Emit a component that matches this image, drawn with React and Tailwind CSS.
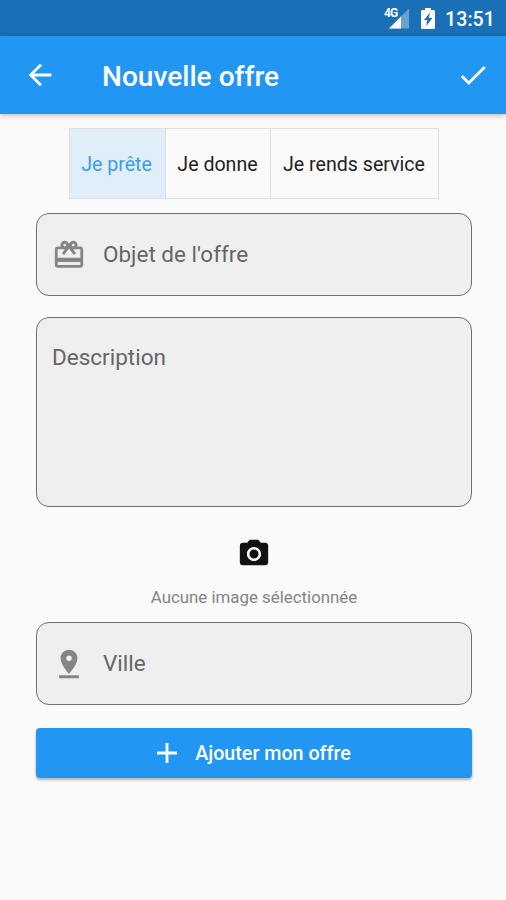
const ICONS = {
  back: "M20 11H7.83l5.59-5.59L12 4l-8 8 8 8 1.41-1.41L7.83 13H20v-2z",
  check: "M9 16.17L4.83 12l-1.42 1.41L9 19 21 7l-1.41-1.41z",
  gift: "M20 6h-2.18c.11-.31.18-.65.18-1 0-1.66-1.34-3-3-3-1.05 0-1.96.54-2.5 1.35l-.5.67-.5-.68C10.96 2.54 10.05 2 9 2 7.34 2 6 3.34 6 5c0 .35.07.69.18 1H4c-1.11 0-1.99.89-1.99 2L2 19c0 1.11.89 2 2 2h16c1.11 0 2-.89 2-2V8c0-1.11-.89-2-2-2zm-5-2c.55 0 1 .45 1 1s-.45 1-1 1-1-.45-1-1 .45-1 1-1zM9 4c.55 0 1 .45 1 1s-.45 1-1 1-1-.45-1-1 .45-1 1-1zm11 15H4v-2h16v2zm0-5H4V8h5.08L7 10.83 8.62 12 11 8.76l1-1.36 1 1.36L15.38 12 17 10.83 14.92 8H20v6z",
  pin: "M18 8c0-3.31-2.69-6-6-6S6 4.69 6 8c0 4.5 6 11 6 11s6-6.5 6-11zm-8 0c0-1.1.9-2 2-2s2 .9 2 2-.89 2-2 2c-1.1 0-2-.9-2-2zM5 20v2h14v-2H5z",
  camera: "M12 8.8a3.2 3.2 0 1 0 0 6.4 3.2 3.2 0 0 0 0-6.4zM9 2L7.17 4H4c-1.1 0-2 .9-2 2v12c0 1.1.9 2 2 2h16c1.1 0 2-.9 2-2V6c0-1.1-.9-2-2-2h-3.17L15 2H9zm3 15c-2.76 0-5-2.24-5-5s2.24-5 5-5 5 2.24 5 5-2.24 5-5 5z",
  plus: "M19 13h-6v6h-2v-6H5v-2h6V5h2v6h6v2z",
};

function Icon({ name, className }) {
  return (
    <svg viewBox="0 0 24 24" fill="currentColor" className={`size-[34px] shrink-0 ${className ?? ""}`}>
      <path d={ICONS[name]} />
    </svg>
  );
}

function StatusBar() {
  return (
    <div className="flex h-9 items-center justify-end bg-[#1a70b7] pr-[11px] text-white">
      <div className="relative mr-3 h-6 w-[25px]">
        <svg viewBox="0 0 25 24" className="size-full">
          <path d="M25 2.500v20H5z" fill="#fff" opacity=".35" />
          <path d="M17 10.500v12H5z" fill="#fff" />
        </svg>
        <span className="absolute top-[2px] left-0 text-[12px] leading-[11px] font-bold tracking-[-1px]">4G</span>
      </div>
      <svg viewBox="0 0 14 21" className="mr-[10px] h-[21px] w-[14px]">
        <path d="M4 0h6v2h2.5Q14 2 14 3.5v16q0 1.500-1.500 1.500h-11Q0 21 0 19.500v-16Q0 2 1.500 2H4z" fill="#fff" />
        <path d="M9 4.500L3 12h3.300l-1 6L11.500 10H7.900z" fill="#1a70b7" />
      </svg>
      <span className="pt-[3px] text-[19.500px] leading-9 font-medium tracking-[0.1px]">13:51</span>
    </div>
  );
}

function Field({ icon, label }) {
  return (
    <div className="flex h-[83px] items-center rounded-[13px] border border-[#707070] bg-[#efefef] pl-[15px] text-[#666]">
      <Icon name={icon} className="text-[#858585]" />
      <span className="mb-[2px] ml-[17px] text-[22.500px] leading-7">{label}</span>
    </div>
  );
}

export default function App() {
  return (
    <div className="h-[900px] w-[506px] overflow-hidden bg-[#fafafa] font-[Roboto,sans-serif]">
      <StatusBar />
      <header className="flex h-[78px] items-center bg-[#2196f3] pr-4 pl-[23px] text-white shadow-[0_1px_5px_rgba(0,0,0,0.3)]">
        <Icon name="back" />
        <h1 className="ml-[45px] flex-1 pt-[3px] text-[28.100px] leading-9 font-medium">Nouvelle offre</h1>
        <Icon name="check" />
      </header>

      <div className="mt-[14px] ml-[69px] flex h-[71px] w-[370px] border border-[#e0e0e0] text-[19.600px] text-[#222]">
        <div className="flex w-24 items-center justify-center border-r border-[#e0e0e0] bg-[#e0eef9] pt-[2px] pr-[2px] text-[#3b9cf0]">Je prête</div>
        <div className="flex w-[105px] items-center justify-center border-r border-[#e0e0e0] pt-[2px] pr-px">Je donne</div>
        <div className="flex flex-1 items-center justify-center pt-[2px] pr-px">Je rends service</div>
      </div>

      <main className="mr-[34px] ml-9">
        <div className="mt-[14px]">
          <Field icon="gift" label="Objet de l'offre" />
        </div>
        <div className="mt-[21px] h-[190px] rounded-[13px] border border-[#707070] bg-[#efefef] pt-[25px] pl-[15px] text-[22.500px] leading-7 text-[#666]">
          Description
        </div>
        <div className="flex flex-col items-center pt-[30px]">
          <Icon name="camera" className="text-[#111]" />
          <p className="mt-[14px] text-[16.850px] leading-6 text-[#858585]">Aucune image sélectionnée</p>
        </div>
        <div className="mt-[13px]">
          <Field icon="pin" label="Ville" />
        </div>
        <button className="mt-[23px] flex h-[50px] w-full items-center justify-center rounded-[4px] bg-[#2196f3] pr-[7px] text-[19.700px] font-medium text-white shadow-[0_2px_3px_rgba(0,0,0,0.3)]">
          <Icon name="plus" />
          <span className="ml-[11px] pt-px">Ajouter mon offre</span>
        </button>
      </main>
    </div>
  );
}
